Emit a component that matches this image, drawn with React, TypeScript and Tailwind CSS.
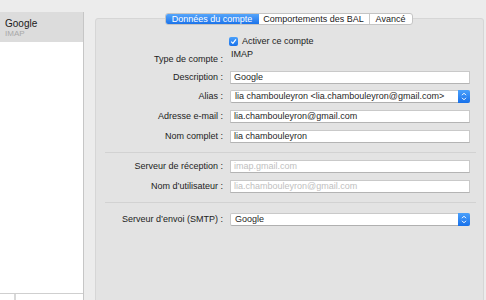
import React from "react";

const Field = ({ value, placeholder }: { value?: string; placeholder?: string }) => (
  <div className="h-[13px] w-[240px] bg-white border border-[#c9c9c9] border-b-[#b4b4b4] flex items-center px-[3px] text-[9px] leading-none">
    {value ? <span className="text-[#1f1f1f]">{value}</span> : <span className="text-[#c0c0c0]">{placeholder}</span>}
  </div>
);

const Popup = ({ value }: { value: string }) => (
  <div className="h-[13px] w-[240px] bg-white border border-[#c9c9c9] border-b-[#b0b0b0] rounded-[2px] flex items-center text-[9px] leading-none">
    <span className="flex-1 pl-[4px] text-[#1f1f1f]">{value}</span>
    <div className="h-[13px] w-[12px] -mr-px -my-px rounded-r-[2px] bg-gradient-to-b from-[#4aa0fb] to-[#1670ea] flex items-center justify-center">
      <svg width="6" height="9" viewBox="0 0 6 9">
        <path d="M1 3.2 L3 1.2 L5 3.2 M1 5.8 L3 7.8 L5 5.8" stroke="white" strokeWidth="1" fill="none" />
      </svg>
    </div>
  </div>
);

const Row = ({ label, children, mt }: { label: string; children: React.ReactNode; mt: string }) => (
  <div className={`flex items-center ${mt}`}>
    <div className="w-[128px] text-right text-[9px] leading-none text-[#222] pr-[1px]">{label}</div>
    <div className="ml-[6px]">{children}</div>
  </div>
);

export default function App() {
  return (
    <div
      className="flex h-[300px] w-[486px] bg-[#ececec] overflow-hidden"
      style={{ fontFamily: '"Liberation Sans", Arial, sans-serif' }}
    >
      {/* Sidebar */}
      <div className="w-[84px] flex flex-col pt-[12px]">
        <div className="flex-1 flex flex-col bg-white border-r border-[#c6c6c6]">
          <div className="h-[30px] bg-[#dcdcdc] pl-[5px] pt-[6px] flex flex-col">
            <span className="text-[10px] leading-[11px] text-[#1a1a1a]">Google</span>
            <span className="text-[8px] leading-[9px] text-[#a9a9a9]">IMAP</span>
          </div>
          <div className="flex-1" />
          <div className="h-[7px] border-t border-[#cfcfcf] flex">
            <div className="w-[15px] border-r border-[#d8d8d8]" />
            <div className="w-[1px] border-r border-[#d8d8d8]" />
          </div>
        </div>
      </div>

      {/* Main */}
      <div className="flex-1 flex flex-col ml-[11px] mr-[2px] pt-[13px]">
        <div className="self-center -translate-x-[1px] flex h-[12px] text-[9px] leading-none rounded-[3px] border border-[#c4c4c4] bg-white z-10 relative overflow-hidden">
          <div className="w-[93px] bg-gradient-to-b from-[#55a5fb] to-[#1b73ea] text-white flex items-center justify-center">
            Données du compte
          </div>
          <div className="w-[111px] border-r border-[#c9c9c9] text-[#222] flex items-center justify-center">
            Comportements des BAL
          </div>
          <div className="w-[42px] text-[#222] flex items-center justify-center">Avancé</div>
        </div>
        <div className="-mt-[7px] -mb-[4px] flex-1 bg-[#e3e3e3] border border-[#d6d6d6] rounded-[3px] flex flex-col">
          <div className="h-[11px]" />
          {/* Checkbox */}
          <div className="flex items-center ml-[133px] mt-[7px]">
            <div className="w-[9px] h-[9px] rounded-[2px] bg-gradient-to-b from-[#4aa0fb] to-[#1670ea] flex items-center justify-center">
              <svg width="7" height="7" viewBox="0 0 7 7">
                <path d="M1.2 3.6 L2.9 5.4 L5.9 1.4" stroke="white" strokeWidth="1.2" fill="none" />
              </svg>
            </div>
            <span className="ml-[4px] text-[9px] leading-none text-[#222]">Activer ce compte</span>
          </div>
          {/* Type */}
          <div className="flex items-start mt-[4px]">
            <div className="w-[128px] text-right text-[9px] leading-none text-[#222] pr-[1px] pt-[5px]">Type de compte :</div>
            <div className="ml-[7px] text-[9px] leading-none text-[#222]">IMAP</div>
          </div>
          <Row label="Description :" mt="mt-[7px]">
            <Field value="Google" />
          </Row>
          <Row label="Alias :" mt="mt-[6px]">
            <Popup value="lia chambouleyron <lia.chambouleyron@gmail.com>" />
          </Row>
          <Row label="Adresse e-mail :" mt="mt-[7px]">
            <Field value="lia.chambouleyron@gmail.com" />
          </Row>
          <Row label="Nom complet :" mt="mt-[7px]">
            <Field value="lia chambouleyron" />
          </Row>
          <div className="mt-[9px] ml-[9px] mr-[7px] border-t border-[#d2d2d2]" />
          <Row label="Serveur de réception :" mt="mt-[7px]">
            <Field placeholder="imap.gmail.com" />
          </Row>
          <Row label="Nom d’utilisateur :" mt="mt-[7px]">
            <Field placeholder="lia.chambouleyron@gmail.com" />
          </Row>
          <div className="mt-[9px] ml-[9px] mr-[7px] border-t border-[#d2d2d2]" />
          <Row label="Serveur d’envoi (SMTP) :" mt="mt-[10px]">
            <Popup value="Google" />
          </Row>
        </div>
      </div>
    </div>
  );
}
